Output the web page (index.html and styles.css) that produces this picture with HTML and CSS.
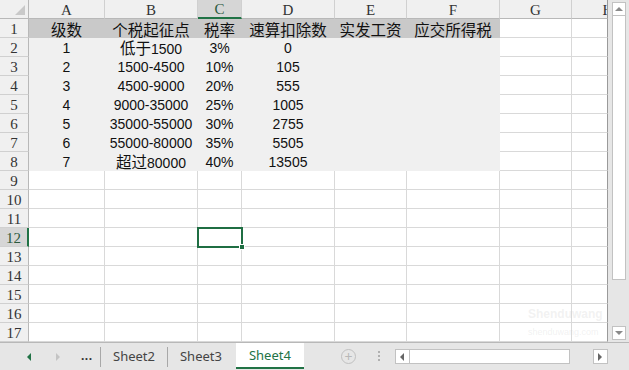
FILE: index.html
```html
<!DOCTYPE html>
<html>
<head>
<meta charset="utf-8">
<link rel="stylesheet" href="styles.css">
</head>
<body>
<div class="app">
  <div class="top">
    <div class="sheet">
      <div class="hd corner"><span class="tri"></span></div>
      <div class="hd col">A</div><div class="hd col">B</div><div class="hd col selc">C</div><div class="hd col">D</div><div class="hd col">E</div><div class="hd col">F</div><div class="hd col">G</div><div class="hd col clip"><span>H</span></div>

      <div class="hd row">1</div>
      <div class="c t1"><span class="cn">级数</span></div><div class="c t1"><span class="cn">个税起征点</span></div><div class="c t1"><span class="cn">税率</span></div><div class="c t1"><span class="cn">速算扣除数</span></div><div class="c t1"><span class="cn">实发工资</span></div><div class="c t1"><span class="cn">应交所得税</span></div><div class="c"></div><div class="c"></div>

      <div class="hd row">2</div>
      <div class="c f">1</div><div class="c f"><span class="v"><span class="cn">低于</span>1500</span></div><div class="c f">3%</div><div class="c f">0</div><div class="c f"></div><div class="c f"></div><div class="c"></div><div class="c"></div>

      <div class="hd row">3</div>
      <div class="c f">2</div><div class="c f">1500-4500</div><div class="c f">10%</div><div class="c f">105</div><div class="c f"></div><div class="c f"></div><div class="c"></div><div class="c"></div>

      <div class="hd row">4</div>
      <div class="c f">3</div><div class="c f">4500-9000</div><div class="c f">20%</div><div class="c f">555</div><div class="c f"></div><div class="c f"></div><div class="c"></div><div class="c"></div>

      <div class="hd row">5</div>
      <div class="c f">4</div><div class="c f">9000-35000</div><div class="c f">25%</div><div class="c f">1005</div><div class="c f"></div><div class="c f"></div><div class="c"></div><div class="c"></div>

      <div class="hd row">6</div>
      <div class="c f">5</div><div class="c f">35000-55000</div><div class="c f">30%</div><div class="c f">2755</div><div class="c f"></div><div class="c f"></div><div class="c"></div><div class="c"></div>

      <div class="hd row">7</div>
      <div class="c f">6</div><div class="c f">55000-80000</div><div class="c f">35%</div><div class="c f">5505</div><div class="c f"></div><div class="c f"></div><div class="c"></div><div class="c"></div>

      <div class="hd row">8</div>
      <div class="c f">7</div><div class="c f"><span class="v"><span class="cn">超过</span>80000</span></div><div class="c f">40%</div><div class="c f">13505</div><div class="c f"></div><div class="c f"></div><div class="c"></div><div class="c"></div>

      <div class="hd row">9</div>
      <div class="c"></div><div class="c"></div><div class="c"></div><div class="c"></div><div class="c"></div><div class="c"></div><div class="c"></div><div class="c"></div>
      <div class="hd row">10</div>
      <div class="c"></div><div class="c"></div><div class="c"></div><div class="c"></div><div class="c"></div><div class="c"></div><div class="c"></div><div class="c"></div>
      <div class="hd row">11</div>
      <div class="c"></div><div class="c"></div><div class="c"></div><div class="c"></div><div class="c"></div><div class="c"></div><div class="c"></div><div class="c"></div>
      <div class="hd row selr">12</div>
      <div class="c"></div><div class="c"></div><div class="c active"><span class="handle"></span></div><div class="c"></div><div class="c"></div><div class="c"></div><div class="c"></div><div class="c"></div>
      <div class="hd row">13</div>
      <div class="c"></div><div class="c"></div><div class="c"></div><div class="c"></div><div class="c"></div><div class="c"></div><div class="c"></div><div class="c"></div>
      <div class="hd row">14</div>
      <div class="c"></div><div class="c"></div><div class="c"></div><div class="c"></div><div class="c"></div><div class="c"></div><div class="c"></div><div class="c"></div>
      <div class="hd row">15</div>
      <div class="c"></div><div class="c"></div><div class="c"></div><div class="c"></div><div class="c"></div><div class="c"></div><div class="c"></div><div class="c"></div>
      <div class="hd row">16</div>
      <div class="c"></div><div class="c"></div><div class="c"></div><div class="c"></div><div class="c"></div><div class="c"></div><div class="c"></div><div class="c"></div>
      <div class="hd row">17</div>
      <div class="c"></div><div class="c"></div><div class="c"></div><div class="c"></div><div class="c"></div><div class="c"></div><div class="c"></div><div class="c"></div>
      <div class="watermark"><span class="wm1">Shenduwang</span><span class="wm2">shenduwang.com</span></div>
    </div>
    <div class="vscroll">
      <div class="vbtn"><span class="tri-up"></span></div>
      <div class="vthumb"></div>
      <div class="vtrack"></div>
      <div class="vbtn"><span class="tri-down"></span></div>
    </div>
  </div>
  <div class="tabbar">
    <div class="nav">
      <span class="arr-l"></span>
      <span class="arr-r"></span>
      <span class="more">...</span>
    </div>
    <span class="sep"></span>
    <span class="tab">Sheet2</span>
    <span class="sep"></span>
    <span class="tab">Sheet3</span>
    <span class="tab on">Sheet4</span>
    <span class="plus">+</span>
    <span class="vdots"></span>
    <div class="hscroll">
      <div class="hbtn"><span class="tri-left"></span></div>
      <div class="hthumb"></div>
      <div class="htrack"></div>
      <div class="hbtn"><span class="tri-right"></span></div>
    </div>
  </div>
</div>
</body>
</html>
```

FILE: styles.css
```css
* { box-sizing: border-box; }
html, body { margin: 0; padding: 0; }
body { width: 629px; height: 370px; overflow: hidden; background: #fff; }
.app { width: 629px; height: 370px; display: flex; flex-direction: column; }
.top { display: flex; height: 342px; }
.sheet {
  position: relative;
  width: 608px;
  display: grid;
  grid-template-columns: 29px 76px 93px 44px 93px 72px 93px 72px 36px;
  grid-template-rows: repeat(18, 19px);
  font-family: "Liberation Sans", "Noto Sans CJK SC", sans-serif;
  font-size: 14px;
  color: #111;
}
.hd {
  background: #f0f0f0;
  border-right: 1px solid #d0d0d0;
  border-bottom: 1px solid #d0d0d0;
  font-family: "Liberation Serif", serif;
  font-size: 15px;
  color: #333;
  display: flex;
  align-items: center;
  justify-content: center;
  line-height: 18px;
  padding-top: 1px;
}
.hd.corner { position: relative; border-right-color: #b8b8b8; border-bottom-color: #b8b8b8; }
.tri {
  position: absolute; right: 3px; bottom: 3px;
  width: 0; height: 0;
  border-left: 10px solid transparent;
  border-bottom: 10px solid #c9c9c9;
}
.hd.col { border-bottom-color: #b8b8b8; }
.hd.row { border-right-color: #b8b8b8; font-size: 15px; }
.hd.selc { background: #d6d6d6; border-bottom: 2px solid #217346; color: #2c5a3e; }
.hd.selr { background: #d6d6d6; border-right: 2px solid #217346; color: #2c5a3e; }
.hd.clip { overflow: hidden; justify-content: flex-start; border-right: 1px solid #9a9a9a; }
.hd.clip span { display: block; width: 72px; text-align: center; flex: none; }
.c {
  border-right: 1px solid #d9d9d9;
  border-bottom: 1px solid #d9d9d9;
  display: flex;
  align-items: center;
  justify-content: center;
  white-space: nowrap;
  line-height: 16px;
  padding-top: 2px;
}
.v { display: block; white-space: nowrap; line-height: 16px; }
.sheet > .c:nth-child(9n) { border-right-color: #9a9a9a; }
.c.t1 { background: #c9c9c9; border-color: #c9c9c9; color: #111; padding-top: 1px; }
.c.f { background: #f0f0f0; border-color: #f0f0f0; }
.cn { font-family: "Noto Sans CJK SC", sans-serif; font-size: 15.5px; line-height: 16px; }
.c.active { position: relative; outline: 2px solid #1f6e43; outline-offset: -1px; z-index: 2; }
.handle {
  position: absolute; right: -4px; bottom: -4px;
  width: 6px; height: 6px; background: #1f6e43; border: 1px solid #fff;
}
.watermark {
  position: absolute; left: 528px; top: 308px;
  display: flex; flex-direction: column; align-items: flex-start;
  color: rgba(210,210,210,0.3);
  font-family: "Liberation Sans", sans-serif; line-height: 1;
}
.wm1 { font-size: 12px; font-weight: bold; }
.wm2 { font-size: 9px; margin-top: 8px; }

.vscroll {
  width: 21px;
  background: #e6e6e6;
  display: flex; flex-direction: column; align-items: center;
  padding: 2px 0 2px 1px;
}
.vbtn {
  width: 14px; height: 14px; background: #fff; border: 1px solid #c2c2c2;
  display: flex; align-items: center; justify-content: center; flex: none;
}
.vthumb { width: 14px; height: 264px; background: #fff; border: 1px solid #c2c2c2; border-top: none; flex: none; }
.vtrack { flex: 1; }
.tri-up { width: 0; height: 0; border-left: 4px solid transparent; border-right: 4px solid transparent; border-bottom: 4px solid #8a8a8a; }
.tri-down { width: 0; height: 0; border-left: 4px solid transparent; border-right: 4px solid transparent; border-top: 4px solid #8a8a8a; }

.tabbar {
  height: 28px;
  background: #e6e6e6;
  border-top: 1px solid #b8b8b8;
  display: flex; align-items: center;
  font-family: "Noto Sans", "Liberation Sans", sans-serif;
  font-size: 13px; color: #444;
  position: relative;
}
.nav { display: flex; align-items: center; width: 100px; padding-left: 27px; }
.arr-l { width: 0; height: 0; border-top: 4px solid transparent; border-bottom: 4px solid transparent; border-right: 4px solid #217346; }
.arr-r { margin-left: 25px; width: 0; height: 0; border-top: 4px solid transparent; border-bottom: 4px solid transparent; border-left: 4px solid #c4c4c4; }
.more { margin-left: 21px; font-weight: bold; color: #333; font-size: 12px; letter-spacing: 0.5px; line-height: 10px; padding-bottom: 2px; }
.sep { width: 1px; height: 20px; background: #a8a8a8; }
.tab { padding: 0 12px; line-height: 27px; height: 27px; }
.tab.on {
  background: #fff; color: #217346;
  width: 68px; text-align: center; padding: 0;
  margin-left: 2px;
  border-bottom: 2px solid #217346;
  align-self: flex-start; height: 26px; line-height: 24px;
}
.plus {
  margin-left: 37px;
  width: 15px; height: 15px; border-radius: 50%;
  border: 1px solid #c0c0c0; color: #b8b8b8;
  display: flex; align-items: center; justify-content: center;
  font-size: 14px; line-height: 1;
}
.vdots {
  margin-left: 22px; width: 2px; height: 12px;
  background: repeating-linear-gradient(to bottom, #b0b0b0 0 2px, transparent 2px 4px);
}
.hscroll {
  margin-left: 15px;
  display: flex; align-items: center; width: 213px; height: 15px;
}
.hbtn {
  width: 15px; height: 15px; background: #fff; border: 1px solid #c2c2c2;
  display: flex; align-items: center; justify-content: center; flex: none;
}
.hthumb { width: 160px; height: 15px; background: #fff; border: 1px solid #c2c2c2; border-left: none; flex: none; }
.htrack { flex: 1; }
.tri-left { width: 0; height: 0; border-top: 4px solid transparent; border-bottom: 4px solid transparent; border-right: 4px solid #666; }
.tri-right { width: 0; height: 0; border-top: 4px solid transparent; border-bottom: 4px solid transparent; border-left: 4px solid #666; }
```
